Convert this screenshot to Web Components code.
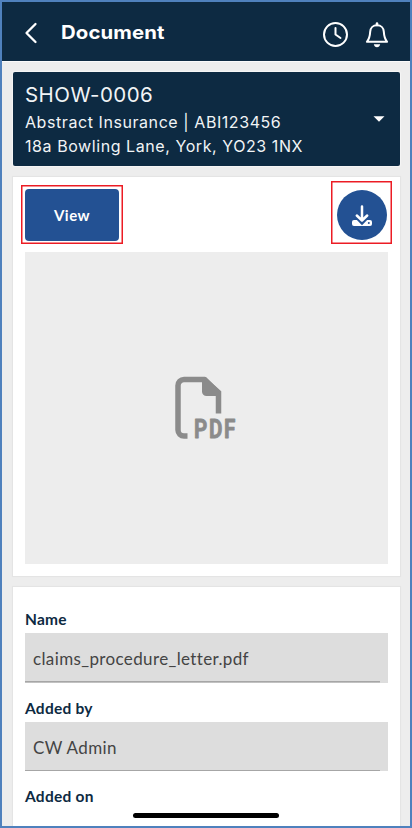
<!DOCTYPE html>
<html lang="en">
<head>
<meta charset="utf-8">
<meta name="viewport" content="width=device-width, initial-scale=1">
<title>Document</title>
<style>
  body {
    margin: 0;
    --navy: #0d2a42;
    --blue: #235193;
    --grey: #ededed;
  }
</style>
</head>
<body>
<app-screen>
  <app-bar slot="bar">Document</app-bar>
  <case-summary>
    <span slot="ref">SHOW-0006</span>
    <span slot="insurer">Abstract Insurance | ABI123456</span>
    <span slot="address">18a Bowling Lane, York, YO23 1NX</span>
  </case-summary>
  <document-preview>View</document-preview>
  <detail-card>
    <detail-field label="Name">claims_procedure_letter.pdf</detail-field>
    <detail-field label="Added by">CW Admin</detail-field>
    <detail-field label="Added on"></detail-field>
  </detail-card>
</app-screen>
<script>
class BaseElement extends HTMLElement {
  constructor() {
    super();
    this.attachShadow({mode: 'open'});
    let template = document.createElement('template');
    template.innerHTML = this.constructor.template;
    this.shadowRoot.appendChild(template.content.cloneNode(true));
  }
}

class AppScreen extends BaseElement {
  static template = `
    <style>
      :host {
        display: flex;
        flex-direction: column;
        position: relative;
        box-sizing: border-box;
        width: 412px;
        height: 828px;
        border: 2px solid #4f81bd;
        background: var(--grey);
        overflow: hidden;
      }
      main {
        display: flex;
        flex-direction: column;
        gap: 11px;
        padding: 10px 10px 0 11px;
        flex: 1;
        min-height: 0;
        border-top: 1px solid #fafafa;
      }
      .home {
        position: absolute;
        left: 131px;
        bottom: 8px;
        width: 146px;
        height: 5px;
        border-radius: 3px;
        background: #000;
      }
    </style>
    <slot name="bar"></slot>
    <main><slot></slot></main>
    <div class="home"></div>`;
}
customElements.define('app-screen', AppScreen);

class AppBar extends BaseElement {
  static template = `
    <style>
      :host {
        display: flex;
        align-items: center;
        box-sizing: border-box;
        height: 59px;
        flex: none;
        padding: 4px 21px 0 22px;
        background: var(--navy);
        color: #fff;
        font: 700 18.5px Inter, sans-serif;
        letter-spacing: 0.1px;
      }
      svg {
        fill: none;
        stroke: #fff;
        flex: none;
      }
      h1 {
        flex: 1;
        margin: -3px 0 0 22.5px;
        font: inherit;
        line-height: 24px;
        transform: scaleX(1.1);
        transform-origin: 0 0;
      }
      .back { margin-top: -2px; }
      .clock { margin: 2px 16px 0 0; }
      .bell { margin-top: 2px; }
    </style>
    <svg class="back" width="14" height="22" viewBox="0 0 14 22" stroke-width="2.3" stroke-linecap="round" stroke-linejoin="round">
      <path d="M11.5 2 2.5 11l9 9"/>
    </svg>
    <h1><slot></slot></h1>
    <svg class="clock" width="26" height="26" viewBox="0 0 26 26" stroke-width="2" stroke-linecap="round" stroke-linejoin="round">
      <circle cx="12.5" cy="12.5" r="11.5"/>
      <path d="M12.5 6v6.500l5 3.500"/>
    </svg>
    <svg class="bell" width="24" height="26" viewBox="0 0 24 26" stroke-width="2" stroke-linejoin="round">
      <path d="M12 1.5V3" stroke-width="2.6" stroke-linecap="round"/>
      <path d="M12 3.2c-4.2 0-6.6 3-6.8 6.4-.3 5-.6 7-3.3 10.2h20.2c-2.7-3.2-3-5.2-3.3-10.2C18.6 6.2 16.2 3.2 12 3.2z"/>
      <path d="M8.8 22.2h6.4c-.4 1.9-1.6 3-3.2 3s-2.8-1.1-3.2-3z" fill="#fff" stroke="none"/>
    </svg>`;
}
customElements.define('app-bar', AppBar);

class CaseSummary extends BaseElement {
  static template = `
    <style>
      :host {
        display: flex;
        align-items: center;
        box-sizing: border-box;
        height: 94px;
        flex: none;
        padding: 0 15px 0 12px;
        border-radius: 2px;
        background: var(--navy);
        box-shadow: 0 0 1px 1px #f6f6f6;
        color: #f1f4f6;
        font: 400 16px/24px Inter, sans-serif;
        letter-spacing: 0.57px;
      }
      .lines {
        flex: 1;
        display: flex;
        flex-direction: column;
        white-space: nowrap;
      }
      .ref {
        font-size: 20.5px;
        line-height: 30px;
        letter-spacing: 0.45px;
      }
    </style>
    <div class="lines">
      <div class="ref"><slot name="ref"></slot></div>
      <div><slot name="insurer"></slot></div>
      <div><slot name="address"></slot></div>
    </div>
    <svg width="12" height="6" viewBox="0 0 12 6"><path d="M.5.2h11L6 5.8z" fill="#fff"/></svg>`;
}
customElements.define('case-summary', CaseSummary);

class DocumentPreview extends BaseElement {
  static template = `
    <style>
      :host {
        display: flex;
        flex-direction: column;
        box-sizing: border-box;
        height: 399px;
        flex: none;
        padding: 4px 12px 12px;
        background: #fff;
        box-shadow: 0 0 1px 1px #e4e4e4;
      }
      .actions {
        display: flex;
        justify-content: space-between;
        align-items: flex-end;
        height: 63px;
        margin: 0 -4px 8px -4px;
      }
      .mark {
        box-sizing: border-box;
        box-shadow: inset 0 0 0 1.5px #ec1c24;
        display: flex;
      }
      .mark.view {
        width: 102px;
        height: 59px;
        padding: 4px 4px 3px;
      }
      .mark.download {
        width: 61px;
        height: 63px;
        padding: 9px 0 0 6px;
      }
      button {
        border: 0;
        padding: 0;
        background: var(--blue);
        color: #fff;
        font: 700 15px Lato, sans-serif;
        letter-spacing: 0.5px;
      }
      .view button {
        flex: 1;
        border-radius: 4px;
      }
      .download button {
        width: 50px;
        height: 50px;
        border-radius: 50%;
      }
      button svg { display: block; margin: 1px auto 0; }
      .page {
        flex: 1;
        display: flex;
        align-items: center;
        justify-content: center;
        background: var(--grey);
      }
      .page svg {
        margin-right: 3px;
        overflow: visible;
      }
    </style>
    <div class="actions">
      <div class="mark view"><button><slot></slot></button></div>
      <div class="mark download">
        <button aria-label="Download">
          <svg width="22" height="22" viewBox="0 0 22 22">
            <path d="M3 15h16a2 2 0 0 1 2 2v2a2 2 0 0 1-2 2H3a2 2 0 0 1-2-2v-2a2 2 0 0 1 2-2z" fill="#fff"/>
            <circle cx="17.8" cy="18" r="1" fill="#235193"/>
            <path d="M5.5 11.5 11 17l5.5-5.5" fill="none" stroke="#235193" stroke-width="4.5"/>
            <path d="M11 1.5V15M5.8 10.5 11 15.5l5.2-5" fill="none" stroke="#fff" stroke-width="2.5" stroke-linecap="round" stroke-linejoin="round"/>
          </svg>
        </button>
      </div>
    </div>
    <div class="page">
      <svg width="70" height="70" viewBox="-2 -2 70 70" fill="#8b8b8b">
        <path d="M15.5 61H12a6 6 0 0 1-6-6V10.5a6 6 0 0 1 6-6h20l14.5 13v21" fill="none" stroke="#8b8b8b" stroke-width="5.5"/>
        <path d="M30 2h4l15 15v4H34.500a4.500 4.500 0 0 1-4.500-4.500z"/>
        <text x="22" y="63" font-family="Roboto, sans-serif" font-weight="700" font-size="25" stroke="#8b8b8b" stroke-width=".8" stroke-linejoin="round" textLength="43" lengthAdjust="spacingAndGlyphs" letter-spacing="2">PDF</text>
      </svg>
    </div>`;
}
customElements.define('document-preview', DocumentPreview);

class DetailCard extends BaseElement {
  static template = `
    <style>
      :host {
        display: flex;
        flex-direction: column;
        gap: 12px;
        flex: none;
        padding: 19px 12px;
        background: #fff;
        box-shadow: 0 0 1px 1px #e4e4e4;
      }
    </style>
    <slot></slot>`;
}
customElements.define('detail-card', DetailCard);

class DetailField extends BaseElement {
  static template = `
    <style>
      :host {
        display: block;
        font: 400 17px Lato, sans-serif;
        color: #444;
      }
      label {
        display: block;
        height: 27px;
        color: var(--navy);
        font-size: 15.5px;
        font-weight: 700;
        line-height: 26px;
        letter-spacing: 0.25px;
      }
      .value {
        height: 49.5px;
        padding-left: 8px;
        line-height: 52px;
        letter-spacing: 0.37px;
        background: linear-gradient(#a6a6a6, #a6a6a6) 0 100% / calc(100% - 8px) 1.5px no-repeat, #ddd;
      }
      .value[hidden] { display: none; }
    </style>
    <label></label>
    <div class="value"><slot></slot></div>`;
  connectedCallback() {
    this.shadowRoot.querySelector('label').textContent = this.getAttribute('label');
    this.shadowRoot.querySelector('.value').hidden = !this.textContent;
  }
}
customElements.define('detail-field', DetailField);
</script>
</body>
</html>
